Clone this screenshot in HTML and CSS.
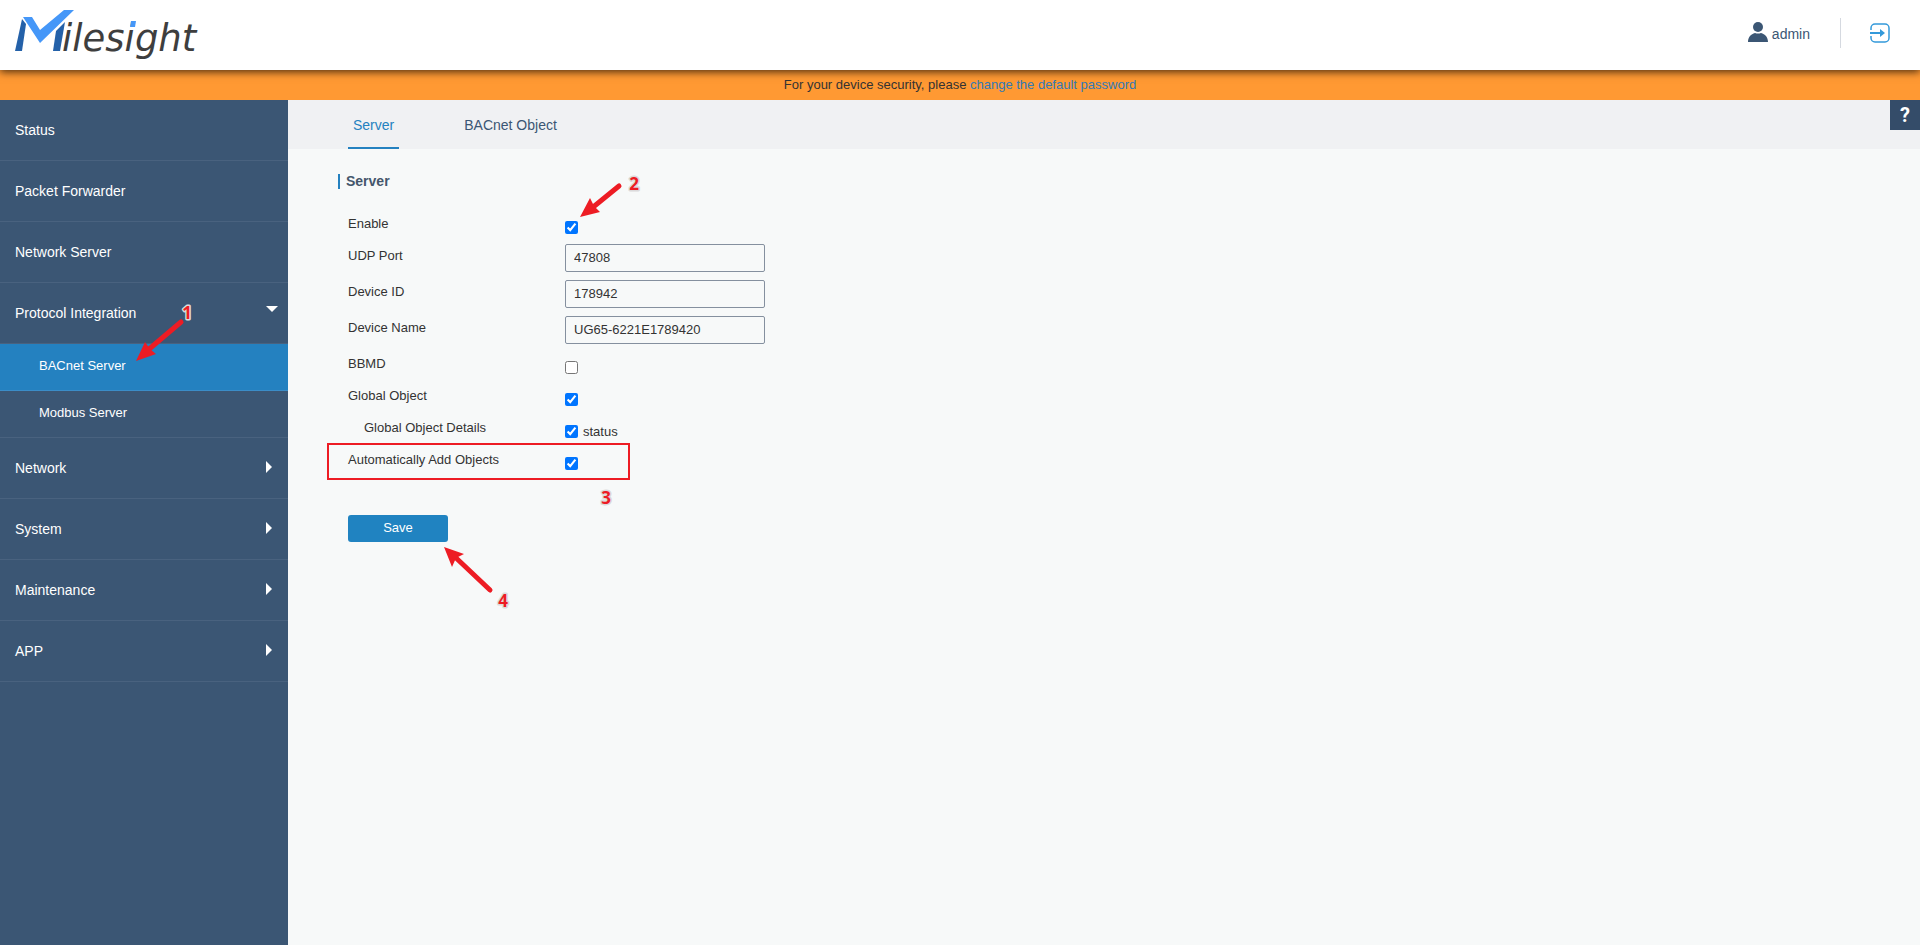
FILE: index.html
```
<!DOCTYPE html>
<html lang="en">
<head>
    <title>Milesight Gateway</title>
    <meta charset="UTF-8">
    <meta name="viewport" content="width=device-width, initial-scale=1.0">
    <link rel="stylesheet" href="styles.css">
</head>
<body>
    <header class="header">
        <a href="#" class="logo" aria-label="Milesight">
            <svg width="210" height="64" viewBox="0 0 210 64">
                <path d="M22 19l4 5-4 27h-7z" fill="#2461a9"/>
                <path d="M65 22l-5 29h-7l3-20z" fill="#2461a9"/>
                <path d="M23 17h9l8 13 24-20h10L40 43z" fill="#4597f8"/>
                <text x="62" y="51" class="logo-text">ilesight</text>
                <path d="M131 21h5l-1 6h-5z" fill="#4597f8"/>
            </svg>
        </a>
        <div class="header-right">
            <div class="user">
                <svg width="20" height="20" viewBox="0 0 20 20">
                    <circle cx="10" cy="5" r="5" fill="#3b5674"/>
                    <path d="M0 20c0-5 3-8 7-9q3 1 6 0c4 1 7 4 7 9z" fill="#3b5674"/>
                </svg>
                <span>admin</span>
            </div>
            <button type="button" class="logout" aria-label="Logout">
                <svg width="20" height="20" viewBox="0 0 20 20" fill="none" stroke="#3399da">
                    <path d="M1 7V5a4 4 0 0 1 4-4h10a4 4 0 0 1 4 4v10a4 4 0 0 1-4 4H5a4 4 0 0 1-4-4v-2" stroke-width="1.5"/>
                    <path d="M0 10h12" stroke-width="2"/>
                    <path d="M10 6l5 4-5 4z" fill="#3399da" stroke="none"/>
                </svg>
            </button>
        </div>
    </header>

    <div class="notice">For your device security, please <a href="#">change the default password</a></div>

    <div class="wrapper">
        <nav class="sidebar">
            <a href="#" class="menu-item">Status</a>
            <a href="#" class="menu-item">Packet Forwarder</a>
            <a href="#" class="menu-item">Network Server</a>
            <a href="#" class="menu-item open">Protocol Integration</a>
            <a href="#" class="sub-item active">BACnet Server</a>
            <a href="#" class="sub-item">Modbus Server</a>
            <a href="#" class="menu-item closed">Network</a>
            <a href="#" class="menu-item closed">System</a>
            <a href="#" class="menu-item closed">Maintenance</a>
            <a href="#" class="menu-item closed">APP</a>
        </nav>

        <main class="content">
            <div class="tabs">
                <a href="#" class="tab active">Server</a>
                <a href="#" class="tab">BACnet Object</a>
                <button type="button" class="help">?</button>
            </div>

            <form class="form">
                <h2>Server</h2>
                <div class="row">
                    <label for="enable">Enable</label>
                    <input type="checkbox" id="enable" checked>
                </div>
                <div class="row">
                    <label for="port">UDP Port</label>
                    <input type="text" id="port" value="47808">
                </div>
                <div class="row">
                    <label for="deviceId">Device ID</label>
                    <input type="text" id="deviceId" value="178942">
                </div>
                <div class="row">
                    <label for="deviceName">Device Name</label>
                    <input type="text" id="deviceName" value="UG65-6221E1789420">
                </div>
                <div class="row">
                    <label for="bbmd">BBMD</label>
                    <input type="checkbox" id="bbmd">
                </div>
                <div class="row">
                    <label for="globalObject">Global Object</label>
                    <input type="checkbox" id="globalObject" checked>
                </div>
                <div class="row">
                    <span class="label indent">Global Object Details</span>
                    <input type="checkbox" id="status" checked>
                    <label for="status" class="option">status</label>
                </div>
                <div class="row">
                    <label for="autoAdd">Automatically Add Objects</label>
                    <input type="checkbox" id="autoAdd" checked>
                </div>
                <button type="submit" class="save">Save</button>
            </form>
        </main>
    </div>

    <!-- step markers drawn over the page -->
    <svg class="steps" width="700" height="640" viewBox="0 0 700 640">
        <g class="arrow">
            <path d="M181 322L148 350"/>
            <path d="M136 361l9-19 5 7 6 5z" class="head"/>
            <path d="M619 186l-27 22"/>
            <path d="M580 217l10-19 4 8 6 6z" class="head"/>
            <path d="M490 590l-36-34"/>
            <path d="M444 547l20 7-8 4-4 9z" class="head"/>
        </g>
        <rect x="328" y="444" width="301" height="35" class="frame"/>
        <text x="187" y="319">1</text>
        <text x="634" y="190">2</text>
        <text x="606" y="504">3</text>
        <text x="503" y="607">4</text>
    </svg>
</body>
</html>
```
FILE: styles.css
```
* {
    box-sizing: border-box;
}
body {
    margin: 0;
    min-height: 100vh;
    display: flex;
    flex-direction: column;
    font-family: "Liberation Sans", Arial, sans-serif;
    font-size: 13px;
    color: #333;
    background: #f7f9f9;
}
a {
    text-decoration: none;
}
.header {
    position: relative;
    height: 70px;
    display: flex;
    justify-content: space-between;
    background: #fff;
    box-shadow: 0 2px 8px rgba(0, 0, 0, 0.7);
}
.logo-text {
    font: italic 37px "DejaVu Sans", sans-serif;
    fill: #3e3e3e;
}
.header-right {
    display: flex;
    align-items: center;
    padding: 0 30px 4px 0;
}
.user {
    display: flex;
    align-items: center;
    gap: 4px;
    height: 30px;
    padding: 0 30px 2px 0;
    border-right: 1px solid #d5d9e0;
    font-size: 14px;
    color: #3b5674;
}
.user span {
    padding-top: 4px;
}
.logout {
    display: flex;
    margin-left: 29px;
    padding: 0;
    border: none;
    background: none;
    cursor: pointer;
}
.notice {
    height: 30px;
    line-height: 30px;
    text-align: center;
    background: #ff9933;
}
.notice a {
    color: #337ab7;
}
.wrapper {
    flex: 1;
    display: flex;
}
.sidebar {
    width: 288px;
    background: #3b5674;
}
.menu-item,
.sub-item {
    display: flex;
    align-items: center;
    justify-content: space-between;
    height: 61px;
    padding: 0 10px 0 15px;
    border-bottom: 1px solid #49627f;
    font-size: 14px;
    color: #fff;
}
.sub-item {
    height: 47px;
    padding: 0 0 3px 39px;
    font-size: 13px;
}
.sub-item.active {
    background: #2481c0;
    border-color: #3b8dc8;
}
.open::after {
    content: "";
    margin-bottom: 8px;
    border: 6px solid transparent;
    border-top-color: #fff;
    border-bottom: none;
}
.closed::after {
    content: "";
    margin: 0 10px 2px 0;
    border: 6px solid transparent;
    border-left-color: #fff;
    border-right: none;
    margin-right: 6px;
}
.content {
    flex: 1;
}
.tabs {
    display: flex;
    gap: 60px;
    height: 49px;
    padding-left: 60px;
    background: #f0f1f3;
}
.tab {
    padding: 0 5px;
    line-height: 50px;
    font-size: 14px;
    color: #3b5674;
}
.tab.active {
    color: #2481c0;
    border-bottom: 2px solid #2481c0;
}
.help {
    width: 30px;
    height: 30px;
    margin-left: auto;
    padding: 0;
    border: none;
    background: #344c69;
    color: #fff;
    font: bold 20px Roboto, sans-serif;
}
.form {
    padding: 25px 60px;
}
h2 {
    margin: 0 0 23px -10px;
    padding-left: 6px;
    border-left: 2px solid #2481c0;
    font-size: 14px;
    line-height: 15px;
    color: #44566c;
}
.row {
    display: flex;
    align-items: flex-start;
    min-height: 32px;
}
.row label,
.row .label {
    width: 217px;
    line-height: 24px;
}
.row .indent {
    padding-left: 16px;
}
.row .option {
    width: auto;
    padding: 4px 0 0 5px;
}
input[type="checkbox"] {
    width: 13px;
    height: 13px;
    margin: 9px 0 0;
}
input[type="text"] {
    width: 200px;
    height: 28px;
    margin-bottom: 8px;
    padding: 0 8px 2px;
    border: 1px solid #85909f;
    border-radius: 2px;
    background: transparent;
    font: inherit;
    color: #333;
}
.save {
    width: 100px;
    height: 27px;
    margin-top: 35px;
    padding: 0 0 2px;
    border: none;
    border-radius: 3px;
    background: #2083c1;
    color: #fff;
    font: inherit;
    cursor: pointer;
}
.steps {
    position: absolute;
    top: 0;
    left: 0;
    pointer-events: none;
}
.steps text {
    font: bold 17px "Open Sans", sans-serif;
    text-anchor: middle;
    fill: #ed1c24;
    stroke: #dcdadb;
    stroke-width: 3px;
    stroke-linejoin: round;
    paint-order: stroke;
}
.arrow {
    fill: none;
    stroke: #ed1c24;
    stroke-width: 5;
    stroke-linecap: round;
}
.arrow .head {
    fill: #ed1c24;
    stroke: none;
}
.frame {
    fill: none;
    stroke: #ed1c24;
    stroke-width: 2;
}
```
